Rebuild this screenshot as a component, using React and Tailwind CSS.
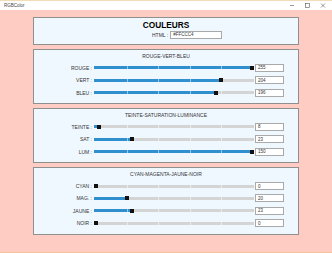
import React from "react";

function Slider({ value, max }) {
  const v = Math.min(value, max);
  const x = (v / max) * 156;
  const ticks = [1, 2, 3, 4];
  return (
    <div className="relative ml-[2px] w-[160px] h-[4px] flex items-center">
      <div className="w-full h-[3px] bg-[#d4d4d4] flex">
        <div className="h-full bg-[#2f8fcf]" style={{ width: x + "px" }} />
      </div>
      {ticks.map((k) => (
        <div
          key={k}
          className="absolute top-[0.5px] h-[3px] w-[1px] bg-white/50"
          style={{ left: 2 + k * 31.2 + "px" }}
        />
      ))}
      <div className="absolute top-0 h-[4px] w-[4px] bg-[#111]" style={{ left: x + "px" }} />
    </div>
  );
}

function Row({ label, value, max }) {
  return (
    <div className="h-[12.4px] flex items-center">
      <div className="w-[58px] text-right text-[5px] leading-[6px] text-[#333]">{label}</div>
      <Slider value={value} max={max} />
      <div className="ml-[1px] w-[29px] h-[8px] bg-white border border-[#a9a9a9] flex items-center pl-[2px] text-[4.5px] leading-[5px] text-[#333]">
        {value}
      </div>
    </div>
  );
}

function Panel({ title, rows, h }) {
  return (
    <div className={`border border-[#8f8f8f] bg-[#F0F8FF] pt-[2px] flex flex-col ${h}`}>
      <div className="h-[8px] leading-[8px] text-center text-[5px] text-[#333]">{title}</div>
      <div className="mt-[2px] flex flex-col">
        {rows.map((r) => (
          <Row key={r[0]} label={r[0]} value={r[1]} max={r[2]} />
        ))}
      </div>
    </div>
  );
}

export default function App() {
  return (
    <div className="w-[332px] h-[253px] flex flex-col font-['Liberation_Sans',Arial,sans-serif] overflow-hidden">
      <div className="h-[10px] bg-white border-t border-[#f3dcb8] flex items-center pl-[4px] shrink-0">
        <span className="text-[4.5px] leading-[5px] text-[#444]">RGBColor</span>
        <div className="ml-auto flex items-center h-full">
          <svg width="14" height="9" viewBox="0 0 14 9" className="mr-[2px]">
            <line x1="6" y1="4.5" x2="10" y2="4.5" stroke="#555" strokeWidth="0.6" />
          </svg>
          <svg width="16" height="9" viewBox="0 0 16 9">
            <rect x="5.5" y="2.5" width="4" height="4" fill="none" stroke="#555" strokeWidth="0.6" />
          </svg>
          <svg width="16" height="9" viewBox="0 0 16 9">
            <line x1="5" y1="2.5" x2="9" y2="6.5" stroke="#555" strokeWidth="0.6" />
            <line x1="9" y1="2.5" x2="5" y2="6.5" stroke="#555" strokeWidth="0.6" />
          </svg>
        </div>
      </div>
      <div className="flex-1 bg-[#FFCCC4] px-[33px] pt-[7px] flex flex-col gap-[3.8px] border-b border-[#f5c29a]">
        <div className="h-[28px] border border-[#8f8f8f] bg-[#F0F8FF] pt-[2.5px] flex flex-col">
          <div className="h-[8px] leading-[8px] text-center text-[8.3px] font-bold text-black">COULEURS</div>
          <div className="mt-[2px] h-[8px] flex items-center pl-[118px]">
            <span className="text-[5px] leading-[6px] text-[#333]">HTML :</span>
            <div className="ml-[2px] w-[52px] h-[8px] bg-white border border-[#a9a9a9] flex items-center pl-[2px] text-[4.5px] leading-[5px] text-[#333]">
              #FFCCC4
            </div>
          </div>
        </div>
        <Panel
          title="ROUGE-VERT-BLEU"
          h="h-[55px]"
          rows={[
            ["ROUGE :", 255, 255],
            ["VERT :", 204, 255],
            ["BLEU :", 196, 255],
          ]}
        />
        <Panel
          title="TEINTE-SATURATION-LUMINANCE"
          h="h-[55.5px]"
          rows={[
            ["TEINTE :", 8, 360],
            ["SAT :", 23, 100],
            ["LUM :", 150, 100],
          ]}
        />
        <Panel
          title="CYAN-MAGENTA-JAUNE-NOIR"
          h="h-[68px]"
          rows={[
            ["CYAN :", 0, 100],
            ["MAG. :", 20, 100],
            ["JAUNE :", 23, 100],
            ["NOIR :", 0, 100],
          ]}
        />
      </div>
    </div>
  );
}
